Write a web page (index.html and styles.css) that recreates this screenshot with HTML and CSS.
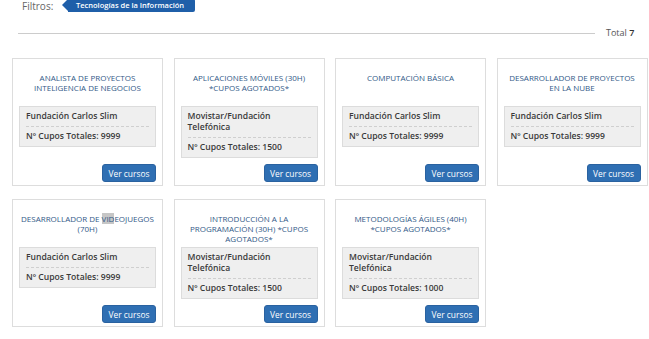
FILE: index.html
```html
<!DOCTYPE html>
<html lang="es">
<head>
    <meta charset="UTF-8">
    <meta name="viewport" content="width=device-width, initial-scale=1.0">
    <title>Cursos</title>
    <link rel="stylesheet" href="styles.css">
</head>
<body>

<div class="page">
    <!-- Filtros activos -->
    <div class="filters">
        <span class="filters-label">Filtros:</span>
        <span class="tag">Tecnologías de la Información</span>
    </div>

    <div class="total-row">
        <div class="total-line"></div>
        <div class="total-text">Total <strong>7</strong></div>
    </div>

    <!-- Listado de cursos -->
    <div class="course-grid">
        <div class="card">
            <div class="card-title">ANALISTA DE PROYECTOS INTELIGENCIA DE NEGOCIOS</div>
            <div class="info-box">
                <div class="info-row">Fundación Carlos Slim</div>
                <div class="info-row">Nº Cupos Totales: 9999</div>
            </div>
            <div class="card-actions"><button class="btn">Ver cursos</button></div>
        </div>

        <div class="card">
            <div class="card-title">APLICACIONES MÓVILES (30H) *CUPOS AGOTADOS*</div>
            <div class="info-box">
                <div class="info-row">Movistar/Fundación Telefónica</div>
                <div class="info-row">Nº Cupos Totales: 1500</div>
            </div>
            <div class="card-actions"><button class="btn">Ver cursos</button></div>
        </div>

        <div class="card">
            <div class="card-title">COMPUTACIÓN BÁSICA</div>
            <div class="info-box">
                <div class="info-row">Fundación Carlos Slim</div>
                <div class="info-row">Nº Cupos Totales: 9999</div>
            </div>
            <div class="card-actions"><button class="btn">Ver cursos</button></div>
        </div>

        <div class="card">
            <div class="card-title">DESARROLLADOR DE PROYECTOS EN LA NUBE</div>
            <div class="info-box">
                <div class="info-row">Fundación Carlos Slim</div>
                <div class="info-row">Nº Cupos Totales: 9999</div>
            </div>
            <div class="card-actions"><button class="btn">Ver cursos</button></div>
        </div>

        <div class="card">
            <div class="card-title">DESARROLLADOR DE <mark class="selected">VID</mark>EOJUEGOS (70H)</div>
            <div class="info-box">
                <div class="info-row">Fundación Carlos Slim</div>
                <div class="info-row">Nº Cupos Totales: 9999</div>
            </div>
            <div class="card-actions"><button class="btn">Ver cursos</button></div>
        </div>

        <div class="card">
            <div class="card-title">INTRODUCCIÓN A LA PROGRAMACIÓN (30H) *CUPOS AGOTADOS*</div>
            <div class="info-box">
                <div class="info-row">Movistar/Fundación Telefónica</div>
                <div class="info-row">Nº Cupos Totales: 1500</div>
            </div>
            <div class="card-actions"><button class="btn">Ver cursos</button></div>
        </div>

        <div class="card">
            <div class="card-title">METODOLOGÍAS ÁGILES (40H) *CUPOS AGOTADOS*</div>
            <div class="info-box">
                <div class="info-row">Movistar/Fundación Telefónica</div>
                <div class="info-row">Nº Cupos Totales: 1000</div>
            </div>
            <div class="card-actions"><button class="btn">Ver cursos</button></div>
        </div>
    </div>
</div>

</body>
</html>
```

FILE: styles.css
```css
/* Global Styles */
body {
    margin: 0;
    padding: 0;
    background-color: #ffffff;
    font-family: 'Open Sans', 'Liberation Sans', sans-serif;
    color: #333333;
    overflow: hidden;
}

.page {
    padding: 0 3px 0 12px;
}

/* Filtros */
.filters {
    display: flex;
    align-items: center;
    height: 13px;
    margin-top: -1px;
}

.filters-label {
    font-size: 10px;
    line-height: 12px;
    color: #666666;
    margin-left: 10px;
    width: 40px;
}

.tag {
    position: relative;
    background-color: #1f5fa9;
    color: #ffffff;
    font-size: 7.5px;
    font-weight: 600;
    height: 13px;
    line-height: 13px;
    padding: 0 11px 0 8px;
    margin-left: 6px;
    border-radius: 0 2px 2px 0;
}

.tag::before {
    content: "";
    position: absolute;
    left: -6px;
    top: 0;
    border-top: 6.5px solid transparent;
    border-bottom: 6.5px solid transparent;
    border-right: 6px solid #1f5fa9;
}

/* Total */
.total-row {
    display: flex;
    align-items: center;
    margin-top: 13px;
    height: 14px;
}

.total-line {
    flex: 1;
    border-top: 1px solid #cccccc;
    margin-left: 6px;
    margin-top: 3px;
}

.total-text {
    font-size: 9px;
    color: #555555;
    width: 40px;
    margin-left: 11px;
}

.total-text strong {
    font-weight: 600;
    color: #333333;
}

/* Tarjetas */
.course-grid {
    display: grid;
    grid-template-columns: repeat(4, 151px);
    column-gap: 10.5px;
    row-gap: 13px;
    margin-top: 19px;
}

.card {
    display: flex;
    flex-direction: column;
    border: 1px solid #dddddd;
    padding: 14px 6px 3px 6px;
}

.card-title {
    font-family: 'Open Sans', 'Liberation Sans', sans-serif;
    font-weight: 400;
    font-size: 8px;
    line-height: 10px;
    min-height: 30px;
    color: #325987;
    text-align: center;
    margin: 0 0 3px 0;
}

.selected {
    background-color: #c6c6c6;
    color: inherit;
}

.info-box {
    background-color: #efefef;
    border: 1px solid #dcdcdc;
    padding: 4px 6px;
}

.info-row {
    font-size: 8.6px;
    font-weight: 600;
    line-height: 11px;
    color: #3a3a3a;
    padding: 0 0 4px 0;
}

.info-row + .info-row {
    border-top: 1px dashed #cfcfcf;
    padding: 4px 0 0 0;
}

.card-actions {
    display: flex;
    justify-content: flex-end;
    margin-top: auto;
    padding-top: 6px;
}

.btn {
    background-color: #2f6fb3;
    color: #ffffff;
    border: 1px solid #2a62a0;
    border-radius: 3px;
    font-family: 'Open Sans', 'Liberation Sans', sans-serif;
    font-size: 8.4px;
    height: 18px;
    width: 54px;
    padding: 0;
    cursor: pointer;
}
```
